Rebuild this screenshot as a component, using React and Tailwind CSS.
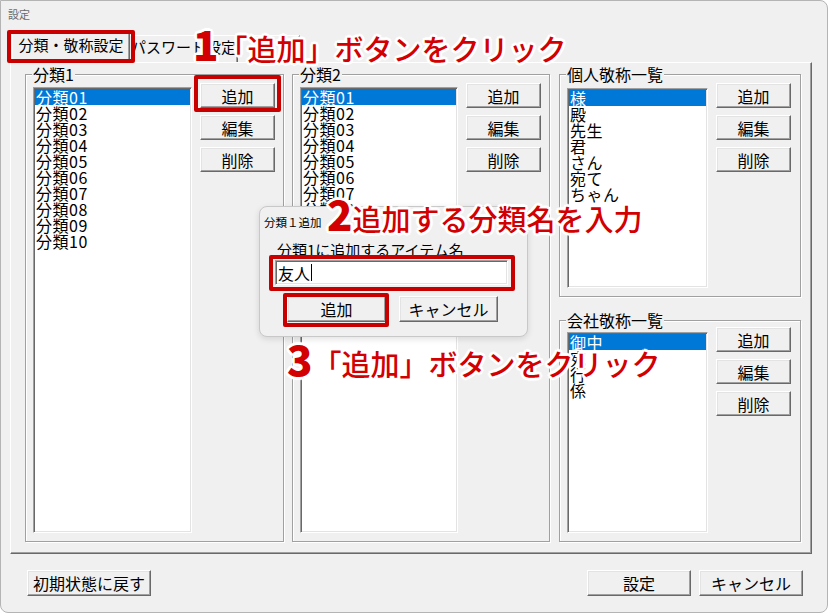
import React from "react";

const Btn = ({ className = "", children }) => (
  <div
    className={`flex items-center justify-center bg-[#f0f0f0] border border-t-white border-l-white border-r-[#696969] border-b-[#696969] shadow-[inset_-1px_-1px_0_#a0a0a0,inset_1px_1px_0_#e3e3e3] text-[16px] leading-none text-black ${className}`}
  >
    {children}
  </div>
);

const ListBox = ({ items, className = "" }) => (
  <div
    className={`bg-white border border-t-[#a0a0a0] border-l-[#a0a0a0] border-r-white border-b-white shadow-[inset_1px_1px_0_#696969,inset_-1px_-1px_0_#e3e3e3] p-[1px] overflow-hidden ${className}`}
  >
    {items.map((t, i) => (
      <div
        key={t}
        className={
          i === 0
            ? "h-[16px] leading-[16px] text-[16px] pl-[1px] bg-[#0078d7] text-white whitespace-nowrap tracking-[0.5px]"
            : "h-[16px] leading-[16px] text-[16px] pl-[1px] text-black whitespace-nowrap tracking-[0.5px]"
        }
      >
        {t}
      </div>
    ))}
  </div>
);

const Buttons = () => (
  <div className="flex flex-col gap-[7px] w-[75px] shrink-0">
    <Btn className="h-[25px]">追加</Btn>
    <Btn className="h-[25px]">編集</Btn>
    <Btn className="h-[25px]">削除</Btn>
  </div>
);

const Group = ({ label, className = "", children }) => (
  <div
    className={`relative border border-[#a0a0a0] shadow-[inset_1px_1px_0_#fff,1px_1px_0_#fff] ${className}`}
  >
    <div className="absolute left-[6px] -top-[9px] bg-[#f0f0f0] px-[1px] text-[16px] leading-[16px] text-black whitespace-nowrap">
      {label}
    </div>
    {children}
  </div>
);

const Ann = ({ num, text, className = "" }) => (
  <div
    className={`absolute z-30 flex items-baseline leading-none text-[#d20000] whitespace-nowrap [text-shadow:0_0_2px_#fff,2px_0_0_#fff,-2px_0_0_#fff,0_2px_0_#fff,0_-2px_0_#fff,2px_2px_0_#fff,-2px_-2px_0_#fff,2px_-2px_0_#fff,-2px_2px_0_#fff,3px_0_1px_#fff,-3px_0_1px_#fff,0_3px_1px_#fff,0_-3px_1px_#fff] ${className}`}
  >
    <span className="text-[42px] font-black">{num}</span>
    <span className="text-[29px] font-medium">{text}</span>
  </div>
);

const RedBox = ({ className = "" }) => (
  <div className={`absolute z-20 border-[4px] border-[#c80000] rounded-[2px] ${className}`} />
);

const bunrui = [
  "分類01",
  "分類02",
  "分類03",
  "分類04",
  "分類05",
  "分類06",
  "分類07",
  "分類08",
  "分類09",
  "分類10",
];

export default function App() {
  return (
    <div className="relative w-[831px] h-[616px] bg-white overflow-hidden font-['Noto_Sans_CJK_JP',sans-serif] text-black">
      {/* Window */}
      <div className="w-[828px] h-[613px] bg-[#f0f0f0] border border-[#b4b4b4] rounded-tr-[8px] rounded-b-[8px] flex flex-col">
        {/* title */}
        <div className="h-[31px] pl-[7px] pt-[7px] text-[11px] leading-[12px] text-[#6a6a6a]">
          設定
        </div>
        {/* tabs */}
        <div className="h-[30px] ml-[9px] flex items-end">
          <div className="relative z-10 ml-[2px] w-[118px] h-[31px] -mb-[1px] bg-[#f0f0f0] border-t border-l border-r border-t-white border-l-white border-r-[#696969] shadow-[inset_-1px_0_0_#a0a0a0] flex justify-center pt-[4px] text-[15px] leading-[16px]">
            分類・敬称設定
          </div>
          <div className="w-[108px] h-[27px] border-t border-r border-t-white border-r-[#696969] shadow-[inset_-1px_0_0_#a0a0a0] flex justify-center pt-[3px] text-[15px] leading-[16px]">
            パスワード設定
          </div>
          <div className="w-[62px] h-[27px] border-t border-r border-t-white border-r-[#696969] shadow-[inset_-1px_0_0_#a0a0a0]" />
        </div>
        {/* panel */}
        <div className="ml-[9px] w-[802px] h-[492px] border border-t-white border-l-white border-r-[#696969] border-b-[#696969] shadow-[inset_-1px_-1px_0_#a0a0a0] pt-[11px] pl-[14px] flex items-start">
          <Group label="分類1" className="w-[259px] h-[468px] pl-[7px] pt-[8px] flex items-start gap-[8px]">
            <ListBox items={bunrui} className="w-[159px] h-[446px] mt-[4px]" />
            <Buttons />
          </Group>
          <Group label="分類2" className="ml-[8px] w-[258px] h-[468px] pl-[7px] pt-[8px] flex items-start gap-[8px]">
            <ListBox items={bunrui} className="w-[158px] h-[446px] mt-[4px]" />
            <Buttons />
          </Group>
          <div className="ml-[9px] w-[242px] flex flex-col gap-[23px]">
            <Group label="個人敬称一覧" className="w-[242px] h-[223px] pl-[7px] pt-[8px] flex items-start gap-[8px]">
              <ListBox
                items={["様", "殿", "先生", "君", "さん", "宛て", "ちゃん"]}
                className="w-[141px] h-[200px] mt-[5px]"
              />
              <Buttons />
            </Group>
            <Group label="会社敬称一覧" className="w-[242px] h-[222px] pl-[7px] pt-[6px] flex items-start gap-[8px]">
              <ListBox
                items={["御中", "宛", "行", "係"]}
                className="w-[141px] h-[201px] mt-[5px]"
              />
              <Buttons />
            </Group>
          </div>
        </div>
        {/* bottom buttons */}
        <div className="mt-[16px] pl-[26px] pr-[24px] flex items-start">
          <Btn className="w-[124px] h-[26px]">初期状態に戻す</Btn>
          <div className="flex-1" />
          <Btn className="w-[104px] h-[26px]">設定</Btn>
          <Btn className="ml-[8px] w-[104px] h-[26px]">キャンセル</Btn>
        </div>
      </div>

      {/* Dialog */}
      <div className="absolute z-20 left-[259px] top-[206px] w-[269px] h-[131px] bg-[#f0f0f0] border border-[#c8c8c8] rounded-[8px] shadow-[0_2px_6px_rgba(0,0,0,0.12)] flex flex-col">
        <div className="pl-[4px] pt-[9px] text-[11.5px] leading-[12px] text-black">分類１追加</div>
        <div className="pl-[15px] flex flex-col">
          <div className="mt-[14px] pl-[2px] text-[15px] leading-[16px]">分類1に追加するアイテム名</div>
          <div className="mt-[2px] w-[233px] h-[25px] bg-white border border-t-[#a0a0a0] border-l-[#a0a0a0] border-r-white border-b-white shadow-[inset_1px_1px_0_#696969,inset_-1px_-1px_0_#e3e3e3] flex items-center pl-[2px] text-[16px] leading-[16px]">
            <span>友人</span>
            <span className="w-[1px] h-[17px] bg-black ml-[1px]" />
          </div>
          <div className="mt-[11px] ml-[12px] flex gap-[13px]">
            <Btn className="w-[99px] h-[26px]">追加</Btn>
            <Btn className="w-[99px] h-[26px]">キャンセル</Btn>
          </div>
        </div>
      </div>

      {/* Red highlight boxes */}
      <RedBox className="left-[7px] top-[30px] w-[128px] h-[33px]" />
      <RedBox className="left-[194px] top-[75px] w-[87px] h-[37px]" />
      <RedBox className="left-[269px] top-[255px] w-[246px] h-[36px]" />
      <RedBox className="left-[283px] top-[293px] w-[106px] h-[34px]" />

      {/* Annotations */}
      <Ann num="1" text="「追加」ボタンをクリック" className="left-[193px] top-[22px]" />
      <Ann num="2" text="追加する分類名を入力" className="left-[327px] top-[192px]" />
      <Ann num="3" text="「追加」ボタンをクリック" className="left-[287px] top-[337px]" />
    </div>
  );
}
